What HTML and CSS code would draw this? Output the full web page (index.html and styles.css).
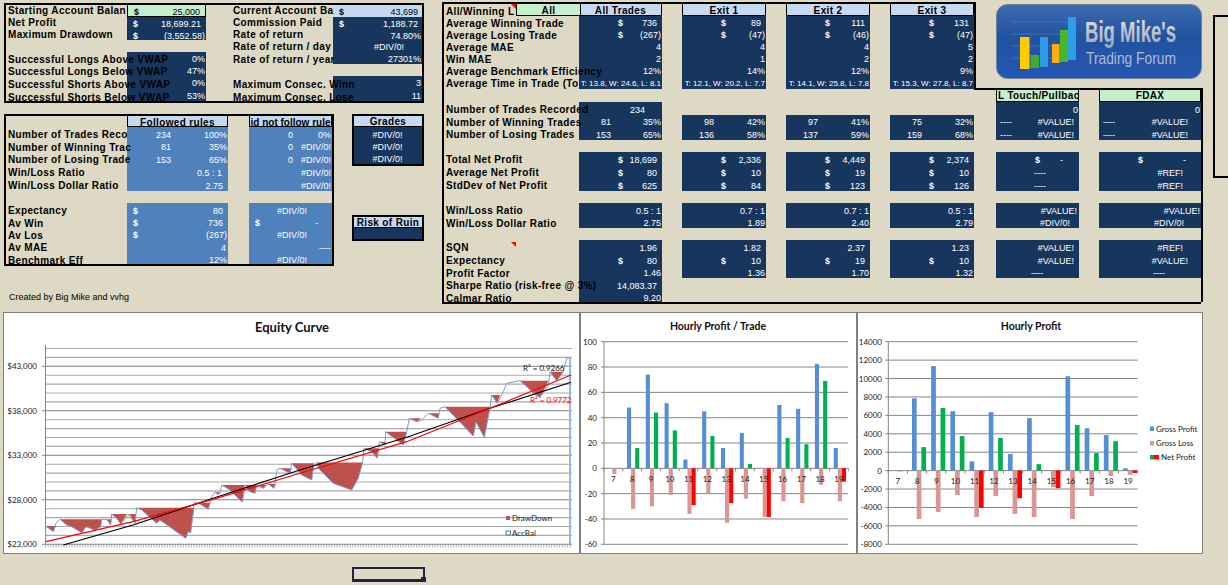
FILE: index.html
```html
<!DOCTYPE html>
<html lang="en">
<head>
    <meta charset="UTF-8">
    <meta name="viewport" content="width=device-width, initial-scale=1.0">
    <title>Trade Analysis</title>

    <link rel="stylesheet" href="styles.css">
</head>
<body>
    <section class="top">
        <div class="left-side">
            <div class="summary panel">
                <div class="summary-col summary-labels labels col-a">
                    <div class="label">Starting Account Balan</div>
                    <div class="label">Net Profit</div>
                    <div class="label">Maximum Drawdown</div>
                    <div></div>
                    <div class="label">Successful Longs Above VWAP</div>
                    <div class="label">Successful Longs Below VWAP</div>
                    <div class="label">Successful Shorts Above VWAP</div>
                    <div class="label">Successful Shorts Below VWAP</div>
                </div>
                <div class="summary-col col-b">
                    <div class="cell green boxed p5"><span class="sym-l sym-dark">$</span>25,000</div>
                    <div class="cell p5"><span class="sym-l">$</span>18,699.21</div>
                    <div class="cell"><span class="sym-l">$</span>(3,552.58)</div>
                    <div></div>
                    <div class="cell">0%</div>
                    <div class="cell">47%</div>
                    <div class="cell">0%</div>
                    <div class="cell">53%</div>
                </div>
                <div class="summary-col summary-labels labels col-c">
                    <div class="label">Current Account Ba</div>
                    <div class="label">Commission Paid</div>
                    <div class="label">Rate of return</div>
                    <div class="label">Rate of return / day</div>
                    <div class="label">Rate of return / year</div>
                    <div></div>
                    <div class="label">Maximum Consec. Winn</div>
                    <div class="label">Maximum Consec. Lose</div>
                </div>
                <div class="summary-col col-d">
                    <div class="cell light p4"><span class="sym-l sym-dark">$</span>43,699</div>
                    <div class="cell p4"><span class="sym-l">$</span>1,188.72</div>
                    <div class="cell">74.80%</div>
                    <div class="cell p18">#DIV/0!</div>
                    <div class="cell">27301%</div>
                    <div></div>
                    <div class="cell">3</div>
                    <div class="cell">11</div>
                </div>
            </div>

            <div class="lower">
                <div class="rules panel">
                    <div class="rules-col labels col-a">
                        <div></div>
                        <div class="label">Number of Trades Reco</div>
                        <div class="label">Number of Winning Trac</div>
                        <div class="label">Number of Losing Trade</div>
                        <div class="label">Win/Loss Ratio</div>
                        <div class="label">Win/Loss Dollar Ratio</div>
                        <div></div>
                        <div class="label">Expectancy</div>
                        <div class="label">Av Win</div>
                        <div class="label">Av Los</div>
                        <div class="label">Av MAE</div>
                        <div class="label">Benchmark Eff</div>
                    </div>
                    <div class="rules-col col-followed">
                        <div class="head light boxed">Followed rules</div>
                        <div class="cell blue"><span class="cnt-l">234</span>100%</div>
                        <div class="cell blue"><span class="cnt-l">81</span>35%</div>
                        <div class="cell blue"><span class="cnt-l">153</span>65%</div>
                        <div class="cell blue p6">0.5 : 1</div>
                        <div class="cell blue p5">2.75</div>
                        <div></div>
                        <div class="cell blue p5"><span class="sym-l">$</span>80</div>
                        <div class="cell blue p5"><span class="sym-l">$</span>736</div>
                        <div class="cell blue"><span class="sym-l">$</span>(267)</div>
                        <div class="cell blue p2">4</div>
                        <div class="cell blue">12%</div>
                    </div>
                    <div class="rules-col col-not-followed">
                        <div class="head light boxed tight">id not follow rule</div>
                        <div class="cell blue"><span class="cnt-l">0</span>0%</div>
                        <div class="cell blue"><span class="cnt-l">0</span>#DIV/0!</div>
                        <div class="cell blue"><span class="cnt-l">0</span>#DIV/0!</div>
                        <div class="cell blue">#DIV/0!</div>
                        <div class="cell blue">#DIV/0!</div>
                        <div></div>
                        <div class="cell blue p25">#DIV/0!</div>
                        <div class="cell blue p14"><span class="sym-l">$</span>-</div>
                        <div class="cell blue p25">#DIV/0!</div>
                        <div class="cell blue">----</div>
                        <div class="cell blue p25">#DIV/0!</div>
                    </div>
                </div>

                <div class="side">
                    <div class="grades panel">
                        <div class="head light">Grades</div>
                        <div class="cell center">#DIV/0!</div>
                        <div class="cell center">#DIV/0!</div>
                        <div class="cell center">#DIV/0!</div>
                    </div>
                    <div class="ruin panel">
                        <div class="head light">Risk of Ruin</div>
                        <div class="cell"></div>
                    </div>
                </div>
            </div>

            <p class="credit">Created by Big Mike and vvhg</p>
        </div>

        <div class="main">
            <div class="main-col labels col-main-label">
                <div class="label-head">
                    <div class="label note">All/Winning L</div>
                    <div class="head green boxed all">All</div>
                </div>
                <div class="label">Average Winning Trade</div>
                <div class="label">Average Losing Trade</div>
                <div class="label">Average MAE</div>
                <div class="label">Win MAE</div>
                <div class="label">Average Benchmark Efficiency</div>
                <div class="label">Average Time in Trade (To</div>
                <div></div>
                <div class="label">Number of Trades Recorded</div>
                <div class="label">Number of Winning Trades</div>
                <div class="label">Number of Losing Trades</div>
                <div></div>
                <div class="label">Total Net Profit</div>
                <div class="label">Average Net Profit</div>
                <div class="label">StdDev of Net Profit</div>
                <div></div>
                <div class="label">Win/Loss Ratio</div>
                <div class="label">Win/Loss Dollar Ratio</div>
                <div></div>
                <div class="label"><span class="note">SQN</span></div>
                <div class="label">Expectancy</div>
                <div class="label">Profit Factor</div>
                <div class="label">Sharpe Ratio (risk-free @ 3%)</div>
                <div class="label">Calmar Ratio</div>
            </div>

            <div class="main-col col-all">
                <div class="head light boxed">All Trades</div>
                <div class="cell p5"><span class="sym">$</span>736</div>
                <div class="cell"><span class="sym">$</span>(267)</div>
                <div class="cell">4</div>
                <div class="cell">2</div>
                <div class="cell">12%</div>
                <div class="cell small">T: 13.8, W: 24.6, L: 8.1</div>
                <div></div>
                <div class="cell p17">234</div>
                <div class="cell"><span class="cnt">81</span>35%</div>
                <div class="cell"><span class="cnt">153</span>65%</div>
                <div></div>
                <div class="cell p5"><span class="sym">$</span>18,699</div>
                <div class="cell p5"><span class="sym">$</span>80</div>
                <div class="cell p5"><span class="sym">$</span>625</div>
                <div></div>
                <div class="cell">0.5 : 1</div>
                <div class="cell">2.75</div>
                <div></div>
                <div class="cell p5">1.96</div>
                <div class="cell p5"><span class="sym">$</span>80</div>
                <div class="cell">1.46</div>
                <div class="cell p5">14,083.37</div>
                <div class="cell">9.20</div>
            </div>

            <div class="main-col col-exit">
                <div class="head light boxed">Exit 1</div>
                <div class="cell p5"><span class="sym">$</span>89</div>
                <div class="cell"><span class="sym">$</span>(47)</div>
                <div class="cell">4</div>
                <div class="cell">1</div>
                <div class="cell">14%</div>
                <div class="cell small">T: 12.1, W: 20.2, L: 7.7</div>
                <div></div>
                <div></div>
                <div class="cell"><span class="cnt">98</span>42%</div>
                <div class="cell"><span class="cnt">136</span>58%</div>
                <div></div>
                <div class="cell p5"><span class="sym">$</span>2,336</div>
                <div class="cell p5"><span class="sym">$</span>10</div>
                <div class="cell p5"><span class="sym">$</span>84</div>
                <div></div>
                <div class="cell">0.7 : 1</div>
                <div class="cell">1.89</div>
                <div></div>
                <div class="cell p5">1.82</div>
                <div class="cell p5"><span class="sym">$</span>10</div>
                <div class="cell">1.36</div>
            </div>

            <div class="main-col col-exit">
                <div class="head light boxed">Exit 2</div>
                <div class="cell p5"><span class="sym">$</span>111</div>
                <div class="cell"><span class="sym">$</span>(46)</div>
                <div class="cell">4</div>
                <div class="cell">2</div>
                <div class="cell">12%</div>
                <div class="cell small">T: 14.1, W: 25.8, L: 7.8</div>
                <div></div>
                <div></div>
                <div class="cell"><span class="cnt">97</span>41%</div>
                <div class="cell"><span class="cnt">137</span>59%</div>
                <div></div>
                <div class="cell p5"><span class="sym">$</span>4,449</div>
                <div class="cell p5"><span class="sym">$</span>19</div>
                <div class="cell p5"><span class="sym">$</span>123</div>
                <div></div>
                <div class="cell">0.7 : 1</div>
                <div class="cell">2.40</div>
                <div></div>
                <div class="cell p5">2.37</div>
                <div class="cell p5"><span class="sym">$</span>19</div>
                <div class="cell">1.70</div>
            </div>

            <div class="main-col col-exit">
                <div class="head light boxed">Exit 3</div>
                <div class="cell p5"><span class="sym">$</span>131</div>
                <div class="cell"><span class="sym">$</span>(47)</div>
                <div class="cell">5</div>
                <div class="cell">2</div>
                <div class="cell">9%</div>
                <div class="cell small">T: 15.3, W: 27.8, L: 8.7</div>
                <div></div>
                <div></div>
                <div class="cell"><span class="cnt">75</span>32%</div>
                <div class="cell"><span class="cnt">159</span>68%</div>
                <div></div>
                <div class="cell p5"><span class="sym">$</span>2,374</div>
                <div class="cell p5"><span class="sym">$</span>10</div>
                <div class="cell p5"><span class="sym">$</span>126</div>
                <div></div>
                <div class="cell">0.5 : 1</div>
                <div class="cell">2.79</div>
                <div></div>
                <div class="cell p5">1.23</div>
                <div class="cell p5"><span class="sym">$</span>10</div>
                <div class="cell">1.32</div>
            </div>

            <div class="main-col col-touch">
                <div></div><div></div><div></div><div></div><div></div><div></div><div></div>
                <div class="head green boxed head-left">L Touch/Pullbac</div>
                <div class="cell">0</div>
                <div class="cell p5"><span class="dash">----</span>#VALUE!</div>
                <div class="cell p5"><span class="dash">----</span>#VALUE!</div>
                <div></div>
                <div class="cell p16"><span class="sym">$</span>-</div>
                <div class="cell"><span class="dash-mid">----</span></div>
                <div class="cell"><span class="dash-mid">----</span></div>
                <div></div>
                <div class="cell p2">#VALUE!</div>
                <div class="cell p9">#DIV/0!</div>
                <div></div>
                <div class="cell p5">#VALUE!</div>
                <div class="cell p5">#VALUE!</div>
                <div class="cell"><span class="dash-low">----</span></div>
            </div>

            <div class="main-col col-fdax">
                <div></div><div></div><div></div><div></div><div></div><div></div><div></div>
                <div class="head green boxed">FDAX</div>
                <div class="cell">0</div>
                <div class="cell p13"><span class="dash">----</span>#VALUE!</div>
                <div class="cell p13"><span class="dash">----</span>#VALUE!</div>
                <div></div>
                <div class="cell p15"><span class="sym">$</span>-</div>
                <div class="cell p18">#REF!</div>
                <div class="cell p18">#REF!</div>
                <div></div>
                <div class="cell">#VALUE!</div>
                <div class="cell p17">#DIV/0!</div>
                <div></div>
                <div class="cell p18">#REF!</div>
                <div class="cell p13">#VALUE!</div>
                <div class="cell"><span class="dash-low">----</span></div>
            </div>

            <div class="frame-upper"></div>
            <div class="frame-lower"></div>

            <svg class="logo" viewBox="996 4 206 75">
                <defs>
                    <linearGradient id="logo-bg" x1="0" y1="0" x2="0" y2="1">
                        <stop offset="0" stop-color="#3a6aae"/>
                        <stop offset="0.45" stop-color="#22539f"/>
                        <stop offset="1" stop-color="#2456b4"/>
                    </linearGradient>
                    <linearGradient id="logo-text" x1="0" y1="0" x2="0" y2="1">
                        <stop offset="0" stop-color="#e8e8e8"/>
                        <stop offset="1" stop-color="#98a4b6"/>
                    </linearGradient>
                </defs>
                <rect x="996.5" y="4.5" width="205" height="74" rx="11" fill="url(#logo-bg)" stroke="#6f8296"/>
                <path d="M1012 22H1076M1012 34H1076M1012 46H1076M1012 58H1076" stroke="#4a78b8" stroke-width="0.7"/>
                <rect x="1020" y="37" width="9.5" height="32" fill="#ffcc00"/>
                <rect x="1030.5" y="55" width="8.5" height="13" fill="#44a832"/>
                <rect x="1040" y="37" width="8" height="30" fill="#2b9be8"/>
                <rect x="1052" y="44" width="7.5" height="19" fill="#ffae0c"/>
                <rect x="1060" y="30" width="8" height="32" fill="#4ab52a"/>
                <rect x="1068" y="17" width="8" height="43" fill="#2c9eee"/>
                <text class="logo-big" x="1085" y="42" textLength="91" lengthAdjust="spacingAndGlyphs" fill="url(#logo-text)">Big Mike's</text>
                <text class="logo-small" x="1086" y="64" textLength="90" lengthAdjust="spacingAndGlyphs" fill="#b0bccc">Trading Forum</text>
            </svg>
        </div>

        <div class="corner-line"></div>
    </section>

    <section class="charts">
        <svg id="equity-chart" class="chart chart-equity" viewBox="3 312 577 242"></svg>
        <svg id="trade-chart" class="chart chart-trade" viewBox="580 312 277 242"></svg>
        <svg id="profit-chart" class="chart chart-profit" viewBox="857 312 346 242"></svg>
    </section>

    <div class="selected"></div>

    <script src="charts.js"></script>
</body>
</html>
```

FILE: styles.css
```css
html, body {
    margin: 0;
    height: 585px;
    overflow: hidden;
}

body {
    font-family: "Liberation Sans", Arial, sans-serif;
    font-size: 9px;
    line-height: 12px;

    background-color: #ddd9c4;
    color: #000;
}

.top {
    display: flex;
    height: 312px;
}

.left-side {
    margin-left: 4px;
    margin-top: 3px;
    width: 420px;
}

.panel {
    border: 2px solid #000;
    box-sizing: border-box;
}

/* rows of the sheet */
.summary {
    display: flex;
    height: 100px;
}

.summary-col {
    display: grid;
    grid-template-columns: minmax(0, 1fr);
    grid-template-rows: 12px 12px 11px 12px 12px 12px 12px 13px;
}

/* the label text sits a bit off the cell rows up here */
.summary-labels {
    grid-template-rows: 12px 12px 12px 13px 12px 13px 13px 12px;
    margin-top: -1px;
    height: 97px;
}

.summary-labels .label {
    padding-top: 1px;
}

.rules-col {
    display: grid;
    grid-template-columns: minmax(0, 1fr);
    grid-template-rows: 11px 13px 12px 13px 13px 13px 12px 13px 12px 12px 13px 11px;
}

.main-col {
    display: grid;
    grid-template-columns: minmax(0, 1fr);
    grid-template-rows: 12px 12px 12px 12px 12px 12px 13px 13px 13px 12px 13px 12px 13px 13px 13px 12px 13px 12px 12px 13px 13px 12px 13px 11px;
}

.labels {
    position: relative;
    z-index: 1;
}

/* column widths */
.col-a { width: 121px; }
.col-b { width: 79px; }
.col-c { width: 102px; margin-left: 25px; }
.col-d { width: 89px; }
.col-followed { width: 101px; }
.col-not-followed { width: 83px; margin-left: 21px; }
.col-main-label { width: 135px; }
.col-all { width: 83px; }
.col-exit { width: 84px; margin-left: 20px; }
.col-touch { width: 83px; margin-left: 22px; }
.col-fdax { width: 102px; margin-left: 20px; }

.label {
    font-weight: bold;
    font-size: 10px;
    letter-spacing: 0.35px;
    padding: 2px 0 0 2px;
    white-space: nowrap;
}

.cell {
    display: flex;
    justify-content: flex-end;
    align-items: center;
    box-sizing: border-box;
    padding-top: 2px;
    padding-right: 1px;

    background-color: #17365d;
    color: #fff;
    white-space: nowrap;
    overflow: hidden;
}

.cell.blue { background-color: #4f81bd; }
.cell.center { justify-content: center; }
.cell.small { font-size: 8px; }

.cell.green, .head.green { background-color: #c4efcc; color: #000; }
.cell.light, .head.light { background-color: #c5d9f1; color: #000; }

.boxed {
    border: 1px solid #000;
    border-top-width: 0;
}

.head {
    font-weight: bold;
    font-size: 10px;
    letter-spacing: 0.35px;
    line-height: 13px;
    text-align: center;
    white-space: nowrap;
    overflow: hidden;
}

.head.tight {
    letter-spacing: 0;
}

.head-left {
    text-align: left;
    padding-left: 1px;
}

.sym-l {
    margin-left: 6px;
    margin-right: auto;
    font-weight: bold;
}

.sym-dark { color: #000; }

.sym {
    margin-left: 39px;
    margin-right: auto;
    font-weight: bold;
}

.cnt {
    width: 32px;
    margin-right: auto;
    text-align: right;
}

.cnt-l {
    width: 44px;
    margin-right: auto;
    text-align: right;
}

.dash { margin-left: 4px; margin-right: auto; }
.dash-mid { margin-right: 32px; }
.dash-low { margin-right: 35px; }

.p2 { padding-right: 2px; }
.p4 { padding-right: 4px; }
.p5 { padding-right: 5px; }
.p6 { padding-right: 6px; }
.p9 { padding-right: 9px; }
.p13 { padding-right: 13px; }
.p14 { padding-right: 14px; }
.p15 { padding-right: 15px; }
.p16 { padding-right: 16px; }
.p17 { padding-right: 17px; }
.p18 { padding-right: 18px; }
.p25 { padding-right: 25px; }

.lower {
    display: flex;
    margin-top: 11px;
}

.rules {
    display: flex;
    width: 330px;
    height: 152px;
}

.side {
    margin-left: 18px;
    width: 72px;
}

.grades {
    display: grid;
    grid-template-rows: 11px 13px 12px 12px;
    height: 52px;
}

.ruin {
    display: grid;
    grid-template-rows: 11px 11px;
    margin-top: 49px;
    height: 26px;
}

.grades .head, .ruin .head {
    border-bottom: 1px solid #000;
    line-height: 11px;
}

.credit {
    margin: 25px 0 0 5px;
    font-size: 9px;
}

/* main table with the notched outline */
.main {
    position: relative;
    display: flex;
    align-self: flex-start;
    margin-left: 18px;
    margin-top: 2px;
    padding-top: 2px;
    border-left: 2px solid #000;
    border-bottom: 2px solid #000;
}

.label-head {
    display: flex;
}

.label-head .note {
    width: 72px;
    box-sizing: border-box;
    flex: none;
}

.label-head .all {
    width: 63px;
    flex: none;
}

.note {
    position: relative;
    display: block;
    width: 70px;
}

.note::after {
    content: '';
    position: absolute;
    top: 0;
    right: 0;
    border-top: 5px solid #f00;
    border-left: 5px solid transparent;
}

.frame-upper {
    position: absolute;
    left: -2px;
    top: 0;
    width: 534px;
    height: 88px;
    box-sizing: border-box;
    border-top: 2px solid #000;
    border-right: 2px solid #000;
    z-index: 2;
    pointer-events: none;
}

.frame-lower {
    position: absolute;
    left: 530px;
    top: 86px;
    width: 229px;
    bottom: 0;
    box-sizing: border-box;
    border-top: 2px solid #000;
    border-right: 2px solid #000;
    z-index: 2;
    pointer-events: none;
}

.logo {
    position: absolute;
    left: 552px;
    top: 2px;
    width: 206px;
    height: 75px;
}

.logo-big {
    font-family: "Liberation Sans", Arial, sans-serif;
    font-size: 30px;
    font-weight: bold;
}

.logo-small {
    font-family: "Liberation Sans", Arial, sans-serif;
    font-size: 17px;
}

.corner-line {
    flex: 1;
    align-self: flex-start;
    margin-top: 15px;
    margin-left: 12px;
    height: 163px;
    box-sizing: border-box;
    border: 2px solid #000;
    border-right: none;
}

/* charts */
.charts {
    display: flex;
    margin-left: 3px;
    height: 242px;
}

.chart {
    display: block;
    height: 242px;
    background-color: #fff;
    outline: 1px solid #808080;
    outline-offset: -1px;
}

.chart-equity { width: 577px; }
.chart-trade { width: 277px; }
.chart-profit { width: 346px; }

.chart text {
    font-family: Lato, "Liberation Sans", sans-serif;
    font-size: 8px;
    fill: #222;
}

.chart text.chart-title {
    font-size: 13px;
    font-weight: bold;
    fill: #111;
}

.chart text.chart-title-small {
    font-size: 10.5px;
    font-weight: bold;
    fill: #111;
}

.chart text.red-text { fill: #f00; }

.selected {
    position: relative;
    width: 73px;
    height: 15px;
    margin-left: 352px;
    margin-top: 13px;
    box-sizing: border-box;
    border: 2px solid #1f2440;
    border-bottom-width: 3px;
}

.selected::after {
    content: '';
    position: absolute;
    right: -3px;
    bottom: -3px;
    width: 5px;
    height: 5px;
    background-color: #1f2440;
}
```

FILE: charts.js
```js
const NS = 'http://www.w3.org/2000/svg'

const add = (svg, tag, attrs, text) => {
    const node = document.createElementNS(NS, tag)
    Object.keys(attrs).forEach((key) => node.setAttribute(key, attrs[key]))
    if (text !== undefined)
        node.textContent = text
    svg.appendChild(node)
    return node
}

const line = (svg, x1, y1, x2, y2, stroke, width) => {
    add(svg, 'line', { x1, y1, x2, y2, stroke, 'stroke-width': width })
}

const drawEquity = () => {
    const svg = document.querySelector('#equity-chart')
    const top = 348.5
    const step = 8.9

    add(svg, 'text', { x: 292, y: 332, 'text-anchor': 'middle', class: 'chart-title' }, 'Equity Curve')

    for (let i = 0; i <= 22; i++) {
        const y = top + i * step
        const major = i % 5 === 2
        line(svg, 45.5, y, 572, y, major ? '#808080' : '#aaaaaa', 1.1)
        if (major) {
            const value = 43000 - (i - 2) * 1000
            line(svg, 42, y, 45.5, y, '#858585', 1)
            add(svg, 'text', { x: 37, y: y + 3, 'text-anchor': 'end' }, '$' + value.toLocaleString('en-US'))
        }
    }

    line(svg, 45.5, 345, 45.5, 544.3, '#858585', 1)
    for (let x = 45.5; x < 572; x += 2.65)
        line(svg, x, 544.3, x, 547.5, '#909090', 0.7)

    const drawdowns = [
        '45.7,526 53.3,531.7 56,526',
        '60,519.3 66.7,525 71.7,526.7 81.7,532.7 86,526.7 90,528.3 95,530 100.7,526.7 101.7,519.3',
        '106.7,519.3 110.7,525 111.5,519.3',
        '111.7,514 116.7,518.3 120.7,524 127,514',
        '127,514 130,515 135,523.3 136,514',
        '136.7,507.7 141.7,510 156.7,523.3 160,520 171.7,528.3 185.7,538.3 188.3,531.7 190.7,532.7 194.3,507.7',
        '194.3,502.7 200,504 208.3,509.3 210.7,502.7',
        '215,492 218,495 220,492',
        '221.7,485 230,490 242.3,502.3 244,490 245,485',
        '245,485 250,491.7 255,493.3 256.7,485',
        '258,485 263.3,488.3 266,485',
        '268.3,484 274,488.3 276,484',
        '280,468.3 290,473.3 291.7,468.3',
        '291.7,463.3 301.7,475 311.7,480 314,463.3',
        '316,462.5 320,470 333.3,483.3 351.7,490 358.3,478.3 362.7,462.5',
        '364,448.3 371.7,451.7 377.3,458.3 379,448.3',
        '379.3,441.7 385,445 385.5,441.7',
        '385.7,431.7 403.3,445 406.7,431.7',
        '409.3,418.3 416.7,421.7 421,418.3',
        '428.3,413.3 438.3,418.3 439,413.3',
        '445,406.7 473.3,436 476,421.7 484.3,437.3 490,406.7',
        '491.7,395 497.3,403.3 500,395',
        '520,380.7 533,393 540,398 545,388 548.3,380.7',
        '550,371.7 556.7,380.7 563.3,371.7'
    ]
    drawdowns.forEach((points) => add(svg, 'polygon', { points, fill: '#c0504d' }))

    const curve = '45.7,541.7 45.7,526 53.3,531.7 56,523.3 60,519.3 66.7,525 71.7,526.7 81.7,532.7 86,526.7 90,528.3 95,530 100.7,526.7 101.7,519.3 106.7,519.3 110.7,525 111.7,514 116.7,518.3 120.7,524 128.3,515 135,523.3 136.7,507.7 141.7,510 156.7,523.3 160,520 171.7,528.3 185.7,538.3 188.3,531.7 190.7,532.7 194.3,502.7 200,504 208.3,509.3 210.7,498.3 215,492 220,493.3 221.7,485 230,490 242.3,502.3 245,486.7 250,491.7 255,493.3 256.7,485 263.3,488.3 268.3,484 274,488.3 277.3,469.3 280,468.3 290,473.3 291.7,463.3 301.7,475 311.7,480 314,463.3 320,470 333.3,483.3 351.7,490 358.3,478.3 362.7,461.7 364,448.3 371.7,451.7 377.3,458.3 379.3,441.7 385,445 385.7,431.7 403.3,445 406.7,431.7 409.3,418.3 416.7,421.7 421.7,420 428.3,413.3 438.3,418.3 440,408.3 445,406.7 473.3,436 476,421.7 484.3,437.3 490,408.3 491.7,395 497.3,403.3 503.3,391.7 506.7,383.3 520,380.7 540,397.3 548.3,385 550,371.7 556.7,380.7 563.3,371.7 566.7,358.3 571,357.7'
    add(svg, 'polyline', { points: curve, fill: 'none', stroke: '#7d9cc8', 'stroke-width': 1 })
    line(svg, 570, 357.7, 570, 544.3, '#95b7e0', 2)

    const blackTrend = '63.3,545 133,525 213,498.3 300,470 406.7,437.3 490,408.3 571,382.3'
    const redTrend = '45.7,541.7 133,521.7 213,499.3 300,473.3 406.7,441.7 490,408.3 571,375'
    add(svg, 'polyline', { points: blackTrend, fill: 'none', stroke: '#000', 'stroke-width': 1.2 })
    add(svg, 'polyline', { points: redTrend, fill: 'none', stroke: '#f00', 'stroke-width': 1.2 })

    add(svg, 'text', { x: 523, y: 371 }, 'R² = 0.9266')
    add(svg, 'text', { x: 530, y: 403, class: 'red-text' }, 'R² = 0.9772')

    add(svg, 'rect', { x: 506, y: 516, width: 4, height: 4, fill: '#c0504d' })
    add(svg, 'text', { x: 512, y: 521 }, 'DrawDown')
    add(svg, 'rect', { x: 506, y: 531, width: 4.5, height: 4, fill: 'none', stroke: '#4f81bd' })
    add(svg, 'text', { x: 512, y: 536 }, 'AccBal')
}

const drawBars = (svg, opts) => {
    const { left, right, top, bottom, max, min, tick, labelX, labelY, barOffset, barWidth, data } = opts
    const unit = (bottom - top) / (max - min)
    const zero = top + max * unit
    const slot = (right - left) / data.length

    for (let value = max; value >= min; value -= tick) {
        const y = top + (max - value) * unit
        line(svg, left, y, right, y, '#858585', 1)
        line(svg, left - 3, y, left, y, '#858585', 1)
        add(svg, 'text', { x: labelX, y: y + 3, 'text-anchor': 'end' }, value)
    }
    line(svg, left, top, left, bottom, '#858585', 1)

    data.forEach((row, i) => {
        const x = left + i * slot + barOffset
        const colors = ['#558ed5', '#d99694', row[2] < 0 ? '#f00' : '#00b050']

        row.forEach((value, n) => {
            const height = Math.abs(value) * unit
            const y = value < 0 ? zero : zero - height
            if (value !== 0)
                add(svg, 'rect', { x: x + n * barWidth, y, width: barWidth, height, fill: colors[n] })
        })

        line(svg, left + i * slot, zero, left + i * slot, zero + 3, '#858585', 1)
    })
    line(svg, right, zero, right, zero + 3, '#858585', 1)

    data.forEach((row, i) => {
        add(svg, 'text', { x: left + (i + 0.5) * slot, y: labelY, 'text-anchor': 'middle' }, i + 7)
    })
}

const drawTradeChart = () => {
    const svg = document.querySelector('#trade-chart')

    add(svg, 'text', { x: 718, y: 329.5, 'text-anchor': 'middle', class: 'chart-title-small' }, 'Hourly Profit / Trade')

    drawBars(svg, {
        left: 604, right: 848.3, top: 341.7, bottom: 544.3,
        max: 100, min: -60, tick: 20, labelX: 597, labelY: 482,
        barOffset: 4.2, barWidth: 4.1,
        data: [
            [0, -4.5, 0], [48, -32, 16], [74, -30, 44], [51.5, -21, 30], [7, -36, -29],
            [45, -20, 25.5], [16, -43, -27.5], [28, -24, 3.5], [0, -38.5, -38.5],
            [50, -26, 24], [47, -27.5, 19], [82.5, -13, 69], [16, -26, -10.5]
        ]
    })
}

const drawProfitChart = () => {
    const svg = document.querySelector('#profit-chart')

    add(svg, 'text', { x: 1031, y: 329.5, 'text-anchor': 'middle', class: 'chart-title-small' }, 'Hourly Profit')

    drawBars(svg, {
        left: 888.3, right: 1137.7, top: 341.7, bottom: 544.3,
        max: 14000, min: -8000, tick: 2000, labelX: 882, labelY: 484,
        barOffset: 4.5, barWidth: 4.7,
        data: [
            [0, -100, 0], [7850, -5250, 2550], [11350, -4500, 6800], [6450, -2650, 3750], [1000, -5050, -4050],
            [6350, -2750, 3550], [1800, -4700, -3000], [5700, -5050, 700], [0, -1800, -1900],
            [10250, -5250, 4950], [4600, -2750, 1900], [3850, -600, 3200], [250, -450, -250]
        ]
    })

    add(svg, 'rect', { x: 1150, y: 426.5, width: 4, height: 4.5, fill: '#558ed5' })
    add(svg, 'text', { x: 1156, y: 432 }, 'Gross Profit')
    add(svg, 'rect', { x: 1150, y: 441, width: 4, height: 4.5, fill: '#d99694' })
    add(svg, 'text', { x: 1156, y: 446 }, 'Gross Loss')
    add(svg, 'rect', { x: 1150, y: 455, width: 4, height: 4.5, fill: '#00b050' })
    add(svg, 'rect', { x: 1154, y: 455, width: 5, height: 4.5, fill: '#f00' })
    add(svg, 'text', { x: 1161, y: 460 }, 'Net Profit')
}

drawEquity()
drawTradeChart()
drawProfitChart()
```
